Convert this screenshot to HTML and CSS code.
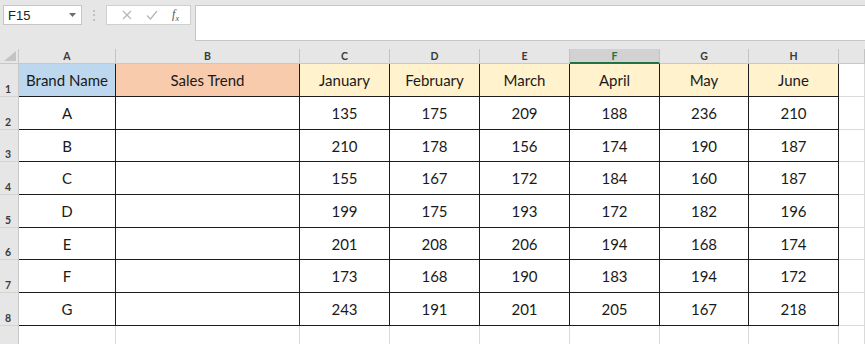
FILE: index.html
```html
<!DOCTYPE html>
<html lang="en">
<head>
    <meta charset="UTF-8">
    <title>Sales Trend</title>
    <link rel="stylesheet" href="styles.css">
</head>
<body>
    <!-- Formula bar -->
    <div class="toolbar">
        <div class="name-box">
            <span>F15</span>
            <svg class="caret" width="7" height="4" viewBox="0 0 7 4"><polygon points="0,0 7,0 3.5,4" fill="#6b6b6b"/></svg>
        </div>
        <div class="grip">⋮</div>
        <div class="fx-buttons">
            <svg width="10" height="10" viewBox="0 0 10 10"><path d="M1 1 L9 9 M9 1 L1 9" stroke="#b5b5b5" stroke-width="1.2" fill="none"/></svg>
            <svg width="12" height="10" viewBox="0 0 12 10"><path d="M1 5.5 L4.5 9 L11 1" stroke="#b5b5b5" stroke-width="1.2" fill="none"/></svg>
            <span class="fx">f<sub>x</sub></span>
        </div>
        <div class="formula"></div>
    </div>

    <!-- Sheet -->
    <div class="sheet" id="sheet">
        <div class="corner">
            <svg width="12" height="10" viewBox="0 0 12 10"><polygon points="12,0 12,10 0,10" fill="#c4c4c4"/></svg>
        </div>
    </div>

    <script>
        const months = ['January', 'February', 'March', 'April', 'May', 'June'];
        const data = [
            ['A', 135, 175, 209, 188, 236, 210],
            ['B', 210, 178, 156, 174, 190, 187],
            ['C', 155, 167, 172, 184, 160, 187],
            ['D', 199, 175, 193, 172, 182, 196],
            ['E', 201, 208, 206, 194, 168, 174],
            ['F', 173, 168, 190, 183, 194, 172],
            ['G', 243, 191, 201, 205, 167, 218]
        ];
        const letters = ['A', 'B', 'C', 'D', 'E', 'F', 'G', 'H', 'I'];
        const sheet = document.getElementById('sheet');

        function cell(cls, text) {
            const el = document.createElement('div');
            el.className = cls;
            el.textContent = text === undefined ? '' : text;
            sheet.appendChild(el);
        }

        letters.forEach(l => cell(l === 'F' ? 'col-head active' : 'col-head', l === 'I' ? '' : l));

        cell('row-head', 1);
        cell('cell head-brand', 'Brand Name');
        cell('cell head-trend', 'Sales Trend');
        months.forEach(m => cell('cell head-month', m));
        cell('grid');

        data.forEach((row, i) => {
            cell('row-head', i + 2);
            cell('cell', row[0]);
            cell('cell');
            row.slice(1).forEach(v => cell('cell', v));
            cell('grid');
        });

        cell('row-head last', '');
        for (let i = 0; i < 9; i++) cell('grid');
    </script>
</body>
</html>
```

FILE: styles.css
```css
body {
    margin: 0;
    background-color: #fff;
    font-family: 'Lato', 'Liberation Sans', sans-serif;
    color: #1a1a1a;
    overflow: hidden;
}
.toolbar {
    display: flex;
    align-items: flex-start;
    height: 49px;
    padding: 5px 0 0 3px;
    box-sizing: border-box;
    background-color: #e6e6e6;
}
.name-box {
    display: flex;
    align-items: center;
    justify-content: space-between;
    width: 79px;
    height: 20px;
    padding: 0 5px 0 4px;
    box-sizing: border-box;
    background-color: #fff;
    border: 1px solid #c6c6c6;
    font-family: 'Liberation Sans', sans-serif;
    font-size: 13px;
    color: #222;
}
.grip {
    width: 24px;
    text-align: center;
    color: #b0b0b0;
    font-size: 12px;
    line-height: 20px;
}
.fx-buttons {
    display: flex;
    align-items: center;
    justify-content: space-around;
    width: 85px;
    height: 20px;
    padding: 0 4px 0 8px;
    box-sizing: border-box;
    background-color: #fff;
    border: 1px solid #d0d0d0;
}
.fx {
    font-family: 'Liberation Serif', serif;
    font-style: italic;
    font-size: 12px;
    color: #555;
}
.fx sub {
    font-size: 8px;
}
.formula {
    flex: 1;
    height: 36px;
    margin-left: 4px;
    background-color: #fff;
    border: 1px solid #c6c6c6;
    border-right: none;
    box-sizing: border-box;
}
.sheet {
    display: grid;
    grid-template-columns: 19px 97px 184px 90px 90px 90px 90px 89px 90px 1fr;
    grid-template-rows: 15px 33px repeat(7, 32.7px) 30px;
}
.corner {
    display: flex;
    align-items: flex-end;
    justify-content: flex-end;
    padding: 0 2px 2px 0;
    background-color: #e6e6e6;
    border-right: 1px solid #c8c8c8;
    border-bottom: 1px solid #c8c8c8;
}
.col-head {
    background-color: #e6e6e6;
    border-right: 1px solid #c3c3c3;
    border-bottom: 1px solid #c8c8c8;
    font-size: 10.5px;
    font-weight: bold;
    color: #3a3a3a;
    text-align: center;
    line-height: 15px;
}
.col-head.active {
    background-color: #d2d2d2;
    border-bottom: 2px solid #217346;
    color: #217346;
    line-height: 14px;
}
.row-head {
    display: flex;
    align-items: flex-end;
    padding: 0 0 1px 5px;
    background-color: #e6e6e6;
    border-right: 1px solid #c8c8c8;
    border-bottom: 1px solid #d4d4d4;
    font-size: 10.5px;
    font-weight: bold;
    color: #3a3a3a;
}
.cell {
    display: flex;
    align-items: center;
    justify-content: center;
    border-right: 1px solid #1c1c1c;
    border-bottom: 1px solid #1c1c1c;
    font-size: 15px;
}
.head-brand {
    background-color: #bdd7ee;
}
.head-trend {
    background-color: #f8cbad;
}
.head-month {
    background-color: #fff2cc;
}
.grid {
    border-right: 1px solid #dadada;
    border-bottom: 1px solid #dadada;
}
```
